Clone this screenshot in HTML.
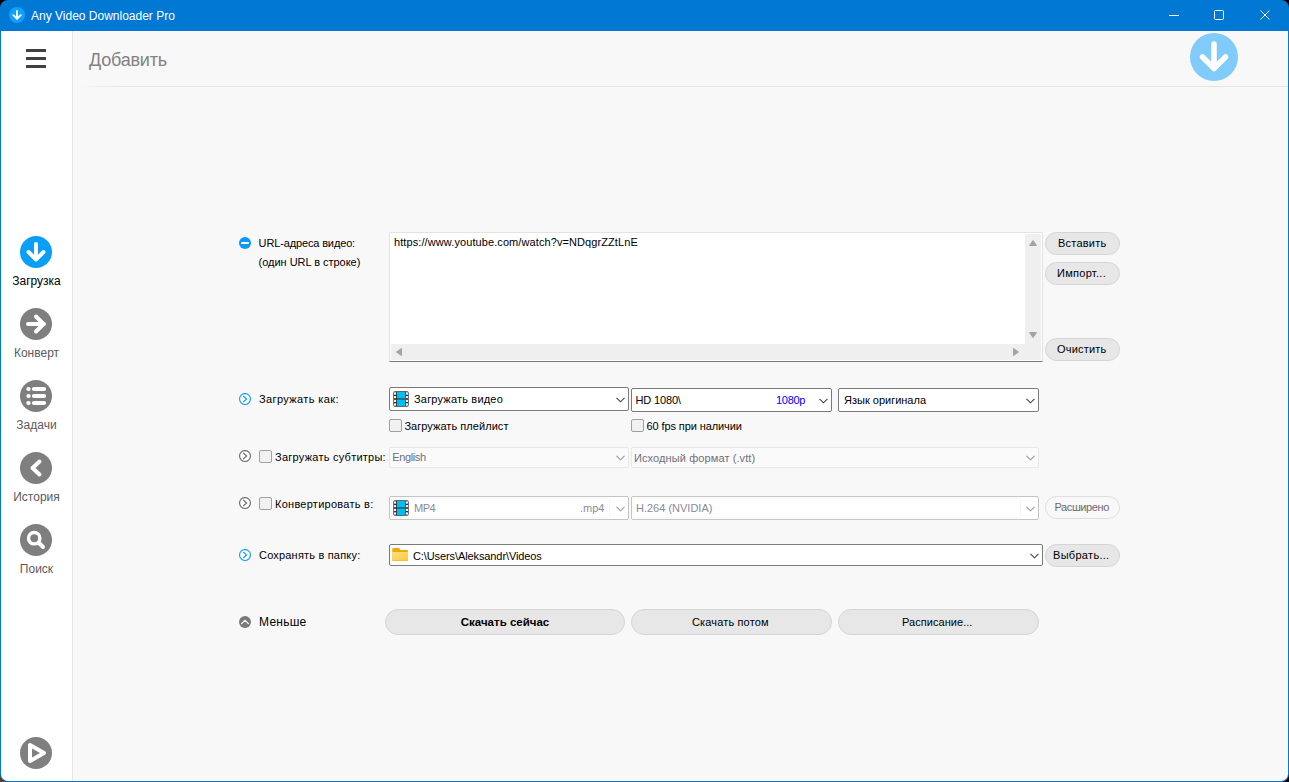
<!DOCTYPE html>
<html><head><meta charset="utf-8">
<style>
*{box-sizing:border-box;margin:0;padding:0}
html,body{width:1289px;height:782px;overflow:hidden;background:#000}
body{font-family:"Liberation Sans",sans-serif;position:relative}
.a{position:absolute}
.t{position:absolute;white-space:pre;line-height:1}
#win{position:absolute;left:0;top:0;width:1289px;height:782px;background:#0078d4;border-radius:8px;overflow:hidden}
</style></head><body>
<div class="a" style="left:0;top:740px;width:20px;height:42px;background:#5a3c30"></div>
<div id="win">
<div class="a" style="left:1px;top:31px;width:71px;height:750px;background:#fff;border-bottom-left-radius:7px"></div>
<div class="a" style="left:72px;top:31px;width:1px;height:750px;background:#e6e6e6"></div>
<div class="a" style="left:73px;top:31px;width:1215px;height:750px;background:#f8f8f8;border-bottom-right-radius:7px"></div>
<svg class="a" style="left:9px;top:7px" width="16" height="16" viewBox="0 0 16 16"><circle cx="8" cy="8" r="8" fill="#10a0ff"/><path d="M8 4V11.6M4.3 8.2L8 11.9L11.7 8.2" stroke="#fff" stroke-width="1.9" fill="none" stroke-linecap="round" stroke-linejoin="round"/></svg>
<div class="t" style="left:31px;top:10px;font-size:12px;color:#fff">Any Video Downloader Pro</div>
<svg class="a" style="left:1160px;top:5px" width="120" height="20" viewBox="0 0 120 20">
    <path d="M9 10.5H19" stroke="#fff" stroke-width="1"/>
    <rect x="54.5" y="5.5" width="9" height="9" rx="1" stroke="#fff" stroke-width="1" fill="none"/>
    <path d="M100.5 5.5L109.5 14.5M109.5 5.5L100.5 14.5" stroke="#fff" stroke-width="1"/>
  </svg>
<svg class="a" style="left:26px;top:48px" width="20" height="21" viewBox="0 0 20 21"><path d="M1 2.5H19M1 10.5H19M1 18.5H19" stroke="#404040" stroke-width="3" stroke-linecap="round"/></svg>
<svg class="a" style="left:20px;top:236px" width="32" height="32" viewBox="0 0 32 32"><circle cx="16" cy="16" r="16" fill="#0a9ff5"/><path d="M16 8V23M8.5 16L16 23.5L23.5 16" stroke="#fff" stroke-width="4" fill="none" stroke-linecap="round" stroke-linejoin="round"/></svg>
<div class="t" style="left:1px;width:71px;text-align:center;top:275px;font-size:12px;color:#000">Загрузка</div>
<svg class="a" style="left:20px;top:308px" width="32" height="32" viewBox="0 0 32 32"><circle cx="16" cy="16" r="16" fill="#7f7f7f"/><path d="M8 16H24M16 8.5L23.5 16L16 23.5" stroke="#fff" stroke-width="4" fill="none" stroke-linecap="round" stroke-linejoin="round"/></svg>
<div class="t" style="left:1px;width:71px;text-align:center;top:347px;font-size:12px;color:#5a5a5a">Конверт</div>
<svg class="a" style="left:20px;top:380px" width="32" height="32" viewBox="0 0 32 32"><circle cx="16" cy="16" r="16" fill="#7f7f7f"/><path d="M8.4 9H8.6M14 9H24M8.4 16H8.6M14 16H24M8.4 23H8.6M14 23H24" stroke="#fff" stroke-width="4.2" fill="none" stroke-linecap="round"/></svg>
<div class="t" style="left:1px;width:71px;text-align:center;top:419px;font-size:12px;color:#5a5a5a">Задачи</div>
<svg class="a" style="left:20px;top:452px" width="32" height="32" viewBox="0 0 32 32"><circle cx="16" cy="16" r="16" fill="#7f7f7f"/><path d="M19.5 9.5L12.5 16L19.5 22.5" stroke="#fff" stroke-width="4" fill="none" stroke-linecap="round" stroke-linejoin="round"/></svg>
<div class="t" style="left:1px;width:71px;text-align:center;top:491px;font-size:12px;color:#5a5a5a">История</div>
<svg class="a" style="left:20px;top:524px" width="32" height="32" viewBox="0 0 32 32"><circle cx="16" cy="16" r="16" fill="#7f7f7f"/><circle cx="14.2" cy="14.2" r="5.7" stroke="#fff" stroke-width="3.4" fill="none"/><path d="M19 19L23 23" stroke="#fff" stroke-width="4" stroke-linecap="round"/></svg>
<div class="t" style="left:1px;width:71px;text-align:center;top:563px;font-size:12px;color:#5a5a5a">Поиск</div>
<svg class="a" style="left:20px;top:737px" width="32" height="32" viewBox="0 0 32 32"><circle cx="16" cy="16" r="16" fill="#7f7f7f"/><path d="M10 8L10 24L24 16Z" stroke="#fff" stroke-width="4" fill="none" stroke-linejoin="round"/></svg>
<div class="t" style="left:89px;top:51px;font-size:18px;color:#828282;letter-spacing:-0.2px">Добавить</div>
<div class="a" style="left:78px;top:86px;width:1210px;height:1px;background:linear-gradient(to right,rgba(228,228,228,0) 0,#e4e4e4 48px)"></div>
<svg class="a" style="left:1190px;top:33px" width="48" height="48" viewBox="0 0 48 48"><circle cx="24" cy="24" r="24" fill="#80cbfa"/><path d="M24 11V35M12.5 24L24 35.5L35.5 24" stroke="#fff" stroke-width="5.5" fill="none" stroke-linecap="round" stroke-linejoin="round"/></svg>
<svg class="a" style="left:239px;top:237px" width="12" height="12" viewBox="0 0 12 12"><circle cx="6" cy="6" r="6" fill="#0a98fa"/><path d="M2.2 6H9.8" stroke="#fff" stroke-width="1.8"/></svg>
<div class="t" style="left:258.6px;top:238px;font-size:11px;color:#000;letter-spacing:-0.14px">URL-адреса видео:</div>
<div class="t" style="left:258.6px;top:257px;font-size:11px;color:#000;letter-spacing:-0.03px">(один URL в строке)</div>
<div class="a" style="left:389px;top:232px;width:654px;height:130px;background:#fff;border:1px solid #e3e3e3;border-bottom-color:#7a7a7a;border-radius:2px 2px 0 0"></div>
<div class="t" style="left:394px;top:237px;font-size:11px;color:#000;letter-spacing:0.09px">https://www.youtube.com/watch?v=NDqgrZZtLnE</div>
<div class="a" style="left:1025px;top:234px;width:16px;height:126px;background:#efefef"></div>
<div class="a" style="left:391px;top:344px;width:650px;height:16px;background:#efefef"></div>
<svg class="a" style="left:391px;top:234px" width="650" height="126" viewBox="0 0 650 126">
    <path d="M642 6.5L645.5 11.5H638.5Z" fill="#a3a3a3" stroke="#a3a3a3" stroke-width="1" stroke-linejoin="round"/>
    <path d="M642 103.5L645.5 98.5H638.5Z" fill="#a3a3a3" stroke="#a3a3a3" stroke-width="1" stroke-linejoin="round"/>
    <path d="M5.5 118L10.5 114.5V121.5Z" fill="#a3a3a3" stroke="#a3a3a3" stroke-width="1" stroke-linejoin="round"/>
    <path d="M627.5 118L622.5 114.5V121.5Z" fill="#a3a3a3" stroke="#a3a3a3" stroke-width="1" stroke-linejoin="round"/>
  </svg>
<div class="a" style="left:1045px;top:232px;width:75px;height:23px;background:#e7e7e7;border:1px solid #d5d5d5;border-radius:11.5px"></div>
<div class="t" style="left:1058px;top:238px;font-size:11px;color:#000;letter-spacing:0.22px">Вставить</div>
<div class="a" style="left:1045px;top:262px;width:75px;height:23px;background:#e7e7e7;border:1px solid #d5d5d5;border-radius:11.5px"></div>
<div class="t" style="left:1057px;top:268px;font-size:11px;color:#000;letter-spacing:0.29px">Импорт...</div>
<div class="a" style="left:1045px;top:338px;width:75px;height:23px;background:#e7e7e7;border:1px solid #d5d5d5;border-radius:11.5px"></div>
<div class="t" style="left:1057px;top:344px;font-size:11px;color:#000;letter-spacing:0.2px">Очистить</div>
<svg class="a" style="left:239px;top:393px" width="12" height="12" viewBox="0 0 12 12"><circle cx="6" cy="6" r="5.45" fill="#fff" stroke="#1a9dfa" stroke-width="1.15"/><path d="M4.5 3.3L7.6 6L4.5 8.7" stroke="#1a9dfa" stroke-width="1.2" fill="none" stroke-linecap="round"/></svg>
<div class="t" style="left:259px;top:394px;font-size:11px;color:#000;letter-spacing:0.39px">Загружать как:</div>
<div class="a" style="left:389px;top:387px;width:240px;height:24px;background:#fff;border:1px solid #7a7a7a;border-radius:2px;"></div>
<svg class="a" style="left:393px;top:391px" width="16" height="16" viewBox="0 0 16 16"><rect x="0.3" y="0.3" width="15.4" height="15.4" rx="1.6" fill="#333"/><rect x="4" y="0.9" width="8.3" height="14.2" fill="#00bdf2"/><rect x="4" y="7.1" width="8.3" height="1.7" fill="#2d5f70"/><g fill="#fff"><rect x="1" y="1.3" width="2.1" height="2.5" rx=".7"/><rect x="1" y="5" width="2.1" height="2.2" rx=".7"/><rect x="1" y="8.8" width="2.1" height="2.3" rx=".7"/><rect x="1" y="12.2" width="2.1" height="2.5" rx=".7"/><rect x="12.9" y="1.3" width="2.1" height="2.5" rx=".7"/><rect x="12.9" y="5" width="2.1" height="2.2" rx=".7"/><rect x="12.9" y="8.8" width="2.1" height="2.3" rx=".7"/><rect x="12.9" y="12.2" width="2.1" height="2.5" rx=".7"/></g></svg>
<div class="t" style="left:414px;top:394px;font-size:11px;color:#000;letter-spacing:0.19px">Загружать видео</div>
<svg class="a" style="left:616px;top:397px" width="9" height="6" viewBox="0 0 9 6"><path d="M0.5 0.8L4.5 4.8L8.5 0.8" stroke="#444" stroke-width="1.1" fill="none"/></svg>
<div class="a" style="left:631px;top:388px;width:201px;height:24px;background:#fff;border:1px solid #7a7a7a;border-radius:2px;"></div>
<div class="t" style="left:635.5px;top:395px;font-size:11px;color:#000;letter-spacing:-0.15px">HD 1080\</div>
<div class="t" style="left:776px;top:395px;font-size:11px;color:#0000ff;letter-spacing:-0.3px">1080p</div>
<svg class="a" style="left:818.5px;top:398px" width="9" height="6" viewBox="0 0 9 6"><path d="M0.5 0.8L4.5 4.8L8.5 0.8" stroke="#444" stroke-width="1.1" fill="none"/></svg>
<div class="a" style="left:838px;top:388px;width:201px;height:24px;background:#fff;border:1px solid #7a7a7a;border-radius:2px;"></div>
<div class="t" style="left:844px;top:395px;font-size:11px;color:#000">Язык оригинала</div>
<svg class="a" style="left:1026px;top:398px" width="9" height="6" viewBox="0 0 9 6"><path d="M0.5 0.8L4.5 4.8L8.5 0.8" stroke="#444" stroke-width="1.1" fill="none"/></svg>
<div class="a" style="left:389px;top:419px;width:13px;height:13px;background:#f1f1f1;border:1px solid #a0a0a0;border-radius:2px"></div>
<div class="t" style="left:404.4px;top:421px;font-size:11px;color:#000;letter-spacing:0.05px">Загружать плейлист</div>
<div class="a" style="left:631px;top:419px;width:13px;height:13px;background:#f1f1f1;border:1px solid #a0a0a0;border-radius:2px"></div>
<div class="t" style="left:646.5px;top:421px;font-size:11px;color:#000;letter-spacing:-0.1px">60 fps при наличии</div>
<svg class="a" style="left:239px;top:450px" width="12" height="12" viewBox="0 0 12 12"><circle cx="6" cy="6" r="5.45" fill="#fff" stroke="#6e6e6e" stroke-width="1.15"/><path d="M4.5 3.3L7.6 6L4.5 8.7" stroke="#6e6e6e" stroke-width="1.2" fill="none" stroke-linecap="round"/></svg>
<div class="a" style="left:259px;top:450px;width:13px;height:13px;background:#f1f1f1;border:1px solid #a0a0a0;border-radius:2px"></div>
<div class="t" style="left:275px;top:452px;font-size:11px;color:#000;letter-spacing:0.25px">Загружать субтитры:</div>
<div class="a" style="left:389px;top:447px;width:240px;height:21px;background:#fafafa;border:1px solid #e8e8e8;border-radius:2px;"></div>
<div class="t" style="left:392.2px;top:452px;font-size:11px;color:#6f6f7a;letter-spacing:-0.37px">English</div>
<svg class="a" style="left:616px;top:455px" width="9" height="6" viewBox="0 0 9 6"><path d="M0.5 0.8L4.5 4.8L8.5 0.8" stroke="#9a9a9a" stroke-width="1.1" fill="none"/></svg>
<div class="a" style="left:631px;top:447px;width:408px;height:21px;background:#fafafa;border:1px solid #e8e8e8;border-radius:2px;"></div>
<div class="t" style="left:634px;top:453px;font-size:11px;color:#6f6f7a;letter-spacing:0.1px">Исходный формат (.vtt)</div>
<svg class="a" style="left:1026px;top:455px" width="9" height="6" viewBox="0 0 9 6"><path d="M0.5 0.8L4.5 4.8L8.5 0.8" stroke="#9a9a9a" stroke-width="1.1" fill="none"/></svg>
<svg class="a" style="left:239px;top:497px" width="12" height="12" viewBox="0 0 12 12"><circle cx="6" cy="6" r="5.45" fill="#fff" stroke="#6e6e6e" stroke-width="1.15"/><path d="M4.5 3.3L7.6 6L4.5 8.7" stroke="#6e6e6e" stroke-width="1.2" fill="none" stroke-linecap="round"/></svg>
<div class="a" style="left:259px;top:497px;width:13px;height:13px;background:#f1f1f1;border:1px solid #a0a0a0;border-radius:2px"></div>
<div class="t" style="left:275px;top:499px;font-size:11px;color:#000;letter-spacing:0.26px">Конвертировать в:</div>
<div class="a" style="left:389px;top:496px;width:240px;height:24px;background:#fff;border:1px solid #c4c4c4;border-radius:2px;"></div>
<svg class="a" style="left:393px;top:500px" width="16" height="16" viewBox="0 0 16 16"><rect x="0.3" y="0.3" width="15.4" height="15.4" rx="1.6" fill="#333"/><rect x="4" y="0.9" width="8.3" height="14.2" fill="#00bdf2"/><rect x="4" y="7.1" width="8.3" height="1.7" fill="#2d5f70"/><g fill="#fff"><rect x="1" y="1.3" width="2.1" height="2.5" rx=".7"/><rect x="1" y="5" width="2.1" height="2.2" rx=".7"/><rect x="1" y="8.8" width="2.1" height="2.3" rx=".7"/><rect x="1" y="12.2" width="2.1" height="2.5" rx=".7"/><rect x="12.9" y="1.3" width="2.1" height="2.5" rx=".7"/><rect x="12.9" y="5" width="2.1" height="2.2" rx=".7"/><rect x="12.9" y="8.8" width="2.1" height="2.3" rx=".7"/><rect x="12.9" y="12.2" width="2.1" height="2.5" rx=".7"/></g></svg>
<div class="t" style="left:414px;top:503px;font-size:11px;color:#8a8a96;letter-spacing:-0.5px">MP4</div>
<div class="t" style="left:580px;top:503px;font-size:11px;color:#8a8a96">.mp4</div>
<div class="a" style="left:391px;top:498px;width:219px;height:20px;border:1px solid #f6f6f6;border-radius:1px"></div>
<svg class="a" style="left:616px;top:506px" width="9" height="6" viewBox="0 0 9 6"><path d="M0.5 0.8L4.5 4.8L8.5 0.8" stroke="#9a9a9a" stroke-width="1.1" fill="none"/></svg>
<div class="a" style="left:631px;top:496px;width:408px;height:24px;background:#fff;border:1px solid #c4c4c4;border-radius:2px;"></div>
<div class="t" style="left:636px;top:503px;font-size:11px;color:#8a8a96">H.264 (NVIDIA)</div>
<div class="a" style="left:633px;top:498px;width:388px;height:20px;border:1px solid #f6f6f6;border-radius:1px"></div>
<svg class="a" style="left:1026px;top:506px" width="9" height="6" viewBox="0 0 9 6"><path d="M0.5 0.8L4.5 4.8L8.5 0.8" stroke="#9a9a9a" stroke-width="1.1" fill="none"/></svg>
<div class="a" style="left:1045px;top:496px;width:75px;height:23px;background:#f8f8f8;border:1px solid #dedede;border-radius:11.5px"></div>
<div class="t" style="left:1054.5px;top:502px;font-size:11px;color:#6a6a74;letter-spacing:-0.4px">Расширено</div>
<svg class="a" style="left:239px;top:549px" width="12" height="12" viewBox="0 0 12 12"><circle cx="6" cy="6" r="5.45" fill="#fff" stroke="#1a9dfa" stroke-width="1.15"/><path d="M4.5 3.3L7.6 6L4.5 8.7" stroke="#1a9dfa" stroke-width="1.2" fill="none" stroke-linecap="round"/></svg>
<div class="t" style="left:259px;top:550px;font-size:11px;color:#000;letter-spacing:0.19px">Сохранять в папку:</div>
<div class="a" style="left:389px;top:544px;width:654px;height:22px;background:#fff;border:1px solid #7a7a7a;border-radius:2px;"></div>
<svg class="a" style="left:391px;top:547px" width="18" height="15" viewBox="0 0 18 15"><defs><linearGradient id="fg" x1="0" y1="0" x2="1" y2="1"><stop offset="0" stop-color="#ffe08a"/><stop offset="1" stop-color="#ffca38"/></linearGradient></defs><path d="M1.2 2.2Q1.2 1 2.4 1H8L9.6 3H15.8Q17 3 17 4.2V12.8Q17 14 15.8 14H2.4Q1.2 14 1.2 12.8Z" fill="#eeaa05"/><path d="M1.2 5H17V12.6Q17 13.4 16.2 13.4H2Q1.2 13.4 1.2 12.6Z" fill="url(#fg)"/></svg>
<div class="t" style="left:413px;top:551px;font-size:11px;color:#000;letter-spacing:-0.1px">C:\Users\Aleksandr\Videos</div>
<svg class="a" style="left:1029.5px;top:553px" width="9" height="6" viewBox="0 0 9 6"><path d="M0.5 0.8L4.5 4.8L8.5 0.8" stroke="#444" stroke-width="1.1" fill="none"/></svg>
<div class="a" style="left:1045px;top:544px;width:75px;height:23px;background:#e7e7e7;border:1px solid #d5d5d5;border-radius:11.5px"></div>
<div class="t" style="left:1053px;top:550px;font-size:11px;color:#000;letter-spacing:0.3px">Выбрать...</div>
<svg class="a" style="left:239px;top:616px" width="12" height="12" viewBox="0 0 12 12"><circle cx="6" cy="6" r="6" fill="#7a7a7a"/><path d="M2.6 7.6L6 4.4L9.4 7.6" stroke="#fff" stroke-width="1.25" fill="none" stroke-linecap="round"/></svg>
<div class="t" style="left:259px;top:616px;font-size:12px;color:#000;letter-spacing:0.25px">Меньше</div>
<div class="a" style="left:385px;top:609px;width:240px;height:26px;background:#e7e7e7;border:1px solid #d5d5d5;border-radius:13.0px"></div>
<div class="t" style="left:385px;width:240px;text-align:center;top:617px;font-size:11.5px;color:#000;font-weight:bold">Скачать сейчас</div>
<div class="a" style="left:631px;top:609px;width:201px;height:26px;background:#e7e7e7;border:1px solid #d5d5d5;border-radius:13.0px"></div>
<div class="t" style="left:692px;top:617px;font-size:11px;color:#000;letter-spacing:0.15px">Скачать потом</div>
<div class="a" style="left:838px;top:609px;width:201px;height:26px;background:#e7e7e7;border:1px solid #d5d5d5;border-radius:13.0px"></div>
<div class="t" style="left:902px;top:617px;font-size:11px;color:#000;letter-spacing:0.05px">Расписание...</div>
</div>
</body></html>
